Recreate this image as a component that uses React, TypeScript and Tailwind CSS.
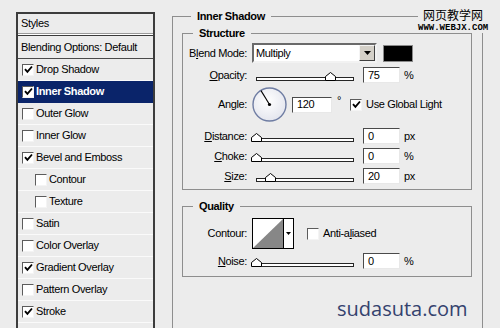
import React from "react";

type Layer = { label: string; checked?: boolean; active?: boolean; nested?: boolean };

const layers: Layer[] = [
  { label: "Drop Shadow", checked: true },
  { label: "Inner Shadow", checked: true, active: true },
  { label: "Outer Glow" },
  { label: "Inner Glow" },
  { label: "Bevel and Emboss", checked: true },
  { label: "Contour", nested: true },
  { label: "Texture", nested: true },
  { label: "Satin" },
  { label: "Color Overlay" },
  { label: "Gradient Overlay", checked: true },
  { label: "Pattern Overlay" },
  { label: "Stroke", checked: true },
];

function CheckBox({ checked = false, className = "" }: { checked?: boolean; className?: string }) {
  return (
    <span
      className={`flex h-[12px] w-[12px] shrink-0 items-center justify-center border border-t-[#5c5c5c] border-l-[#5c5c5c] border-b-[#f4f4f4] border-r-[#f4f4f4] bg-white ${className}`}
    >
      {checked && (
        <svg width="9" height="9" viewBox="0 0 9 9">
          <path d="M1 4.2 L3.4 6.8 L8 1.5" fill="none" stroke="#000" strokeWidth="1.9" />
        </svg>
      )}
    </span>
  );
}

function Label({ children }: { children: React.ReactNode }) {
  return <span className="w-[64px] shrink-0 text-right">{children}</span>;
}

function NumBox({ value, className = "ml-[9px] w-[37px]" }: { value: string; className?: string }) {
  return (
    <div
      className={`flex h-[16px] shrink-0 items-center border border-t-[#4a4a4a] border-l-[#4a4a4a] border-b-[#e8e8e8] border-r-[#e8e8e8] bg-white pl-[4px] ${className}`}
    >
      {value}
    </div>
  );
}

// pos: thumb centre, px from the track's left end
function Slider({ pos }: { pos: number }) {
  return (
    <div className="relative ml-[5px] h-[18px] w-[102px] shrink-0 pl-[4px] pt-[11px]">
      <div className="h-[4px] border border-[#262626] bg-white" />
      <svg className="absolute top-[6px]" style={{ left: pos - 1.5 }} width="11" height="9" viewBox="0 0 11 9">
        <path d="M0.5 8.5V4.5L5.5 0.5L10.5 4.5V8.5Z" fill="#fff" stroke="#000" />
      </svg>
    </div>
  );
}

function SliderRow({ label, pos, value, unit, className }: { label: React.ReactNode; pos: number; value: string; unit: string; className: string }) {
  return (
    <div className={`flex h-[18px] items-center ${className}`}>
      <Label>{label}</Label>
      <Slider pos={pos} />
      <NumBox value={value} />
      <span className="ml-[4px]">{unit}</span>
    </div>
  );
}

export default function App() {
  return (
    <div className="relative flex h-[328px] w-[500px] items-start overflow-hidden bg-[#ececec] font-['Liberation_Sans',Arial,sans-serif] text-[11px] leading-[13px] tracking-[-0.35px] text-black">
      {/* styles list */}
      <div className="ml-[16px] mt-[12px] h-[330px] w-[139px] shrink-0 border-2 border-b-0 border-[#3c3c3c]">
        <div className="flex h-[19px] items-center pl-[3px]">Styles</div>
        <div className="h-[3px] border-y border-t-[#9a9a9a] border-b-[#3a3a3a] bg-white" />
        <div className="flex h-[23px] items-center border-b border-[#4a4a4a] pl-[3px]">Blending Options: Default</div>
        {layers.map((l) => (
          <div
            key={l.label}
            className={`flex h-[22px] items-center gap-[2px] border-b ${l.nested ? "pl-[17px]" : "pl-[4px]"} ${
              l.active ? "border-[#0a246a] bg-[#0a246a] font-bold text-white" : "border-[#fafafa]"
            }`}
          >
            <CheckBox checked={l.checked} />
            <span>{l.label}</span>
          </div>
        ))}
        <div className="h-[22px]" />
      </div>

      {/* Inner Shadow group */}
      <fieldset className="ml-[17px] mt-[10px] h-[330px] w-[311px] shrink-0 border border-[#8e8e8e] pl-[9px] pr-[10px]">
        <legend className="ml-[9px] px-[6px] font-bold leading-[13px]">Inner Shadow</legend>

        <fieldset className="mt-[4px] w-[290px] border border-[#8e8e8e] pb-[4px]">
          <legend className="ml-[10px] px-[6px] font-bold leading-[13px]">Structure</legend>

          <div className="mt-[3px] flex h-[20px] items-center">
            <Label>
              B<span className="underline">l</span>end Mode:
            </Label>
            <div className="ml-[5px] flex h-[20px] w-[125px] shrink-0 border-2 border-t-[#6a6a6a] border-l-[#6a6a6a] border-b-[#f2f2f2] border-r-[#f2f2f2] bg-white">
              <span className="flex flex-1 items-center pl-[2px]">Multiply</span>
              <span className="flex w-[16px] items-center justify-center border border-t-[#f4f4f4] border-l-[#f4f4f4] border-b-[#404040] border-r-[#404040] bg-[#d4d0c8]">
                <svg width="7" height="4" viewBox="0 0 7 4">
                  <path d="M0 0H7L3.5 4Z" fill="#000" />
                </svg>
              </span>
            </div>
            <div className="ml-[6px] h-[17px] w-[30px] border border-[#8a8a8a] bg-black" />
          </div>

          <SliderRow
            className="mt-[3px]"
            label={<><span className="underline">O</span>pacity:</>}
            pos={74}
            value="75"
            unit="%"
          />

          <div className="mt-[2px] flex h-[37px] items-center">
            <Label>Angle:</Label>
            <svg className="ml-[5px] shrink-0" width="35" height="35" viewBox="0 0 35 35">
              <defs>
                <radialGradient id="dial" cx="0.45" cy="0.4" r="0.6">
                  <stop offset="0" stopColor="#ffffff" />
                  <stop offset="1" stopColor="#e4e6ee" />
                </radialGradient>
              </defs>
              <circle cx="17.5" cy="17.5" r="16.5" fill="url(#dial)" stroke="#6f7da3" strokeWidth="1.4" />
              <line x1="17.5" y1="17.5" x2="9" y2="3.6" stroke="#000" strokeWidth="1.1" />
              <circle cx="17.5" cy="17.5" r="1.6" fill="#000" />
            </svg>
            <NumBox value="120" className="ml-[5px] w-[40px]" />
            <span className="ml-[5px] self-start pt-[8px]">°</span>
            <CheckBox checked className="ml-[9px]" />
            <span className="ml-[4px]">Use Global Light</span>
          </div>

          <SliderRow className="mt-[4px]" label={<><span className="underline">D</span>istance:</>} pos={0} value="0" unit="px" />
          <SliderRow className="mt-[2px]" label={<><span className="underline">C</span>hoke:</>} pos={0} value="0" unit="%" />
          <SliderRow className="mt-[2px]" label={<><span className="underline">S</span>ize:</>} pos={14} value="20" unit="px" />
        </fieldset>

        <fieldset className="mt-[10px] w-[290px] border border-[#8e8e8e] pb-[6px]">
          <legend className="ml-[10px] px-[6px] font-bold leading-[13px]">Quality</legend>

          <div className="mt-[5px] flex h-[31px] items-center">
            <Label>Contour:</Label>
            <div className="ml-[5px] flex h-[31px] w-[42px] shrink-0 border border-black bg-white">
              <svg width="30" height="29" viewBox="0 0 30 29" className="shrink-0">
                <path d="M0 29L30 0V29Z" fill="#878787" />
              </svg>
              <span className="flex flex-1 items-center justify-center border-l border-black">
                <svg width="5" height="3" viewBox="0 0 5 3">
                  <path d="M0 0H5L2.5 3Z" fill="#000" />
                </svg>
              </span>
            </div>
            <CheckBox className="ml-[13px]" />
            <span className="ml-[4px]">
              Anti-a<span className="underline">l</span>iased
            </span>
          </div>

          <SliderRow className="mt-[3px]" label={<><span className="underline">N</span>oise:</>} pos={0} value="0" unit="%" />
        </fieldset>
      </fieldset>

      {/* watermarks */}
      <div className="absolute left-[418px] top-0 h-[33px] w-[82px] bg-[#ececec] tracking-normal">
        <div className="ml-[5px] mt-[8px] font-['Noto_Sans_CJK_SC',sans-serif] text-[12px] leading-[14px]">网页教学网</div>
        <div className="mt-[2px] font-['Liberation_Mono',monospace] text-[9px] font-bold leading-[8px]">WWW.WEBJX.COM</div>
      </div>
      <div className="absolute left-[337px] top-[295px] font-['Open_Sans',sans-serif] text-[20px] leading-[28px] tracking-normal text-[#34426e]">
        sudasuta.com
      </div>
    </div>
  );
}
